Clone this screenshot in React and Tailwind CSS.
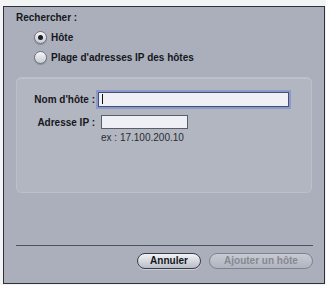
import React from 'react';

const Radio = ({ checked, label }) => (
  <div className="flex items-center gap-[4px] h-[18px]">
    <span className="w-[13px] h-[13px] rounded-full border border-[#6e727c] bg-gradient-to-b from-[#f4f5f8] to-[#c9ccd4] flex items-center justify-center shadow-[0_1px_1px_rgba(0,0,0,0.2)]">
      {checked && <span className="w-[5px] h-[5px] rounded-full bg-[#1e1f24]" />}
    </span>
    <span className="text-[10px] font-bold text-[#16171b]">{label}</span>
  </div>
);

export default function App() {
  return (
    <div className="w-[326px] h-[285px] bg-[#f2f3f5] pt-[6px] pl-[3px] pr-[1px] pb-[1px] font-['Liberation_Sans',Arial,sans-serif]">
      <div className="h-full border border-[#2e3036] bg-[#aaafbb] flex flex-col px-[12px] pt-[4px]">
        <div className="text-[10px] font-bold text-[#16171b] h-[14px] leading-[14px]">Rechercher :</div>
        <div className="pl-[18px] pt-[3px] flex flex-col gap-[2px]">
          <Radio checked label="Hôte" />
          <Radio label="Plage d'adresses IP des hôtes" />
        </div>

        <div className="mt-[11px] h-[116px] rounded-[5px] border border-[#bcc0ca] bg-[#b2b6c1] shadow-[inset_0_1px_0_rgba(255,255,255,0.15)] pt-[13px]">
          <div className="flex items-center h-[16px]">
            <span className="w-[80px] text-right text-[10px] font-bold text-[#16171b] pr-[2px]">Nom d'hôte :</span>
            <div className="ml-[1px] w-[191px] h-[15px] bg-[#eef0f5] border border-[#44506e] shadow-[0_0_0_2px_rgba(110,130,210,0.55)] flex items-center pl-[3px]">
              <span className="w-[1px] h-[10px] bg-[#111]" />
            </div>
          </div>
          <div className="flex items-center h-[16px] mt-[7px]">
            <span className="w-[80px] text-right text-[10px] font-bold text-[#16171b] pr-[2px]">Adresse IP :</span>
            <div className="ml-[4px] w-[87px] h-[14px] bg-[#eef0f5] border border-[#5a5e68]" />
          </div>
          <div className="pl-[84px] mt-[2px] text-[10px] text-[#2a2c32] leading-[12px]">ex : 17.100.200.10</div>
        </div>

        <div className="mt-auto border-t border-[#4e525c] h-[38px] flex items-start justify-end gap-[8px] pt-[7px] -mr-[1px]">
          <button className="h-[16px] w-[64px] rounded-full border border-[#3a3d44] bg-gradient-to-b from-[#f2f3f6] to-[#b9bdc7] text-[10px] font-bold text-[#15161a] leading-[14px] shadow-[0_1px_0_rgba(255,255,255,0.4)]">Annuler</button>
          <button className="h-[16px] w-[104px] rounded-full border border-[#7f838d] bg-gradient-to-b from-[#c8cbd3] to-[#b0b4be] text-[10px] font-bold text-[#858992] leading-[14px]">Ajouter un hôte</button>
        </div>
      </div>
    </div>
  );
}
